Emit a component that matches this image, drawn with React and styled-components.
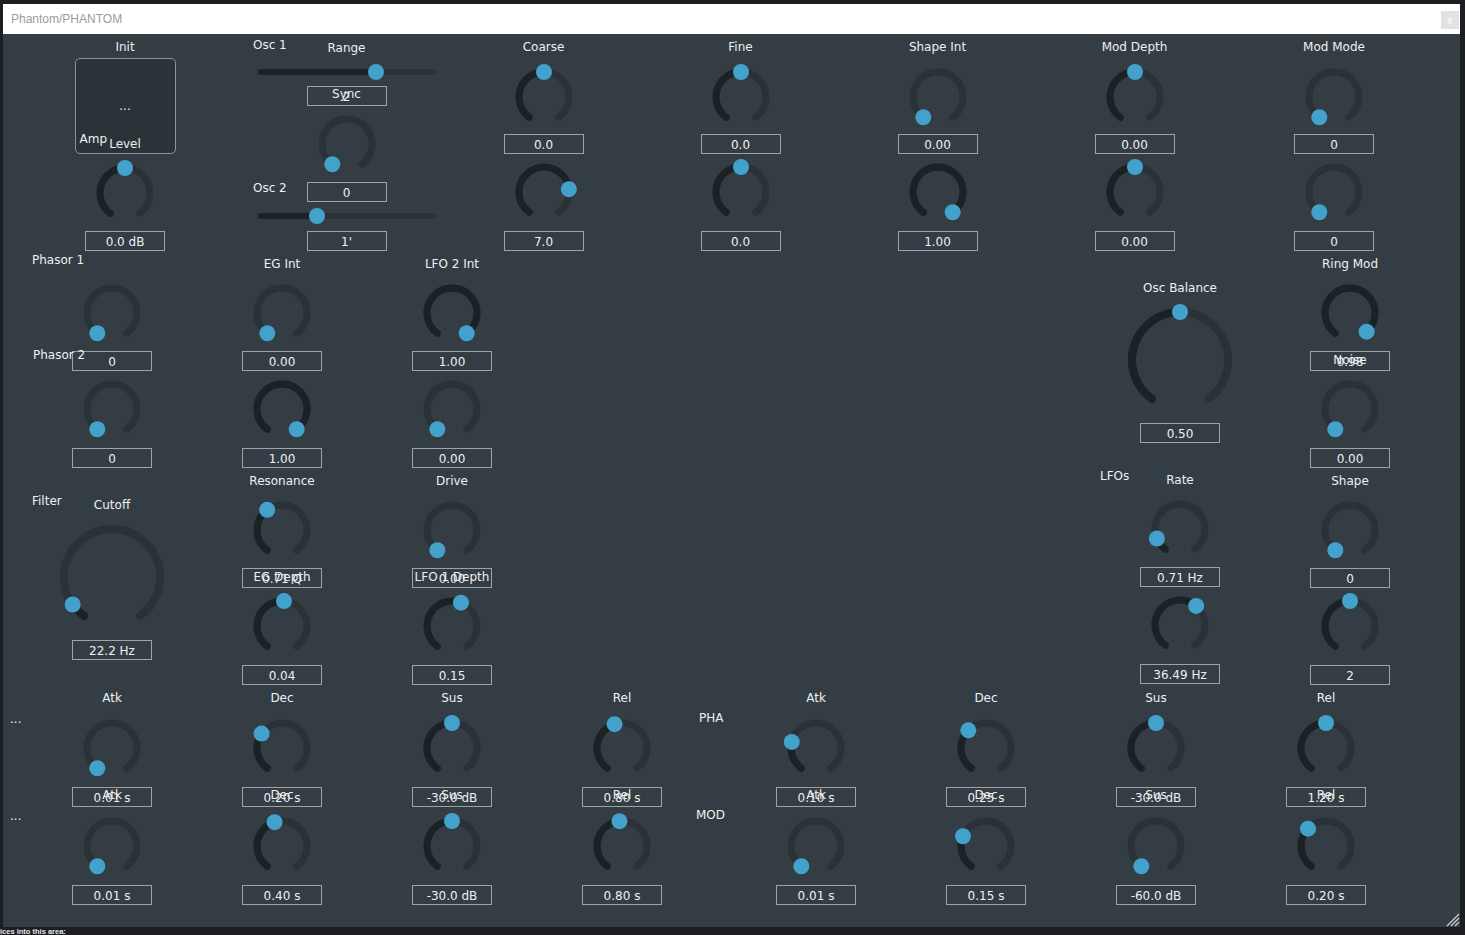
import React from 'react'
import styled, { createGlobalStyle } from 'styled-components'

const GlobalStyle = createGlobalStyle`
  html, body {
    margin: 0;
    padding: 0;
    background: #1c1e21;
  }
  body {
    font-family: "DejaVu Sans", sans-serif;
  }
`

const Page = styled.div`
  width: 1465px;
  height: 935px;
  box-sizing: border-box;
  padding: 4px 5px 0 3px;
  display: flex;
  flex-direction: column;
  overflow: hidden;
`

const Window = styled.div`
  width: 1457px;
  height: 923px;
  display: flex;
  flex-direction: column;
  flex-shrink: 0;
`

const TitleBar = styled.div`
  height: 30px;
  flex-shrink: 0;
  background: #ffffff;
  display: flex;
  align-items: center;
  justify-content: space-between;
  padding: 0 1px 0 8px;
`

const Title = styled.span`
  font: 12px "Liberation Sans", Arial, sans-serif;
  color: #9b9b9b;
`

const CloseButton = styled.div`
  width: 18px;
  height: 18px;
  margin-top: 2px;
  background: #e2e2e2;
  color: #f7f7f7;
  font: bold 10px "Liberation Sans", sans-serif;
  display: flex;
  align-items: center;
  justify-content: center;
`

const Panel = styled.div`
  position: relative;
  flex: 1;
  background: #343d44;
  color: #eef0f1;
  font: 12px "DejaVu Sans", sans-serif;
  display: flex;
  flex-direction: column;
`

const TopSection = styled.div`
  display: flex;
  align-items: flex-start;
  height: 217px;
  padding-left: 37px;
  flex-shrink: 0;
`

const MidSection = styled.div`
  display: flex;
  justify-content: space-between;
  align-items: flex-start;
  height: 438px;
  padding: 0 25px 0 24px;
  flex-shrink: 0;
`

const BottomSection = styled.div`
  display: flex;
  align-items: flex-start;
  padding-left: 7px;
`

const Group = styled.div`
  display: flex;
  align-items: flex-start;
`

const Col = styled.div`
  width: ${p => p.$w || 170}px;
  margin-left: ${p => p.$ml || 0}px;
  padding-top: ${p => p.$pt || 0}px;
  display: flex;
  flex-direction: column;
  align-items: center;
  flex-shrink: 0;
`

const Label = styled.div`
  height: 16px;
  line-height: 18px;
  white-space: nowrap;
  margin-top: ${p => p.$mt || 0}px;
  margin-left: ${p => p.$ml || 0}px;
  align-self: ${p => (p.$left ? 'flex-start' : 'center')};
  justify-self: ${p => (p.$left ? 'start' : 'center')};
`

const HeadRow = styled.div`
  width: 100%;
  display: grid;
  grid-template-columns: 1fr auto 1fr;
  align-items: start;
  margin-top: ${p => p.$mt || 0}px;
`

const KnobSvg = styled.svg`
  display: block;
  overflow: visible;
  flex-shrink: 0;
  margin-top: ${p => p.$mt || 0}px;
`

const BoxFrame = styled.div`
  position: relative;
  width: 80px;
  height: 20px;
  box-sizing: border-box;
  padding-top: 2px;
  border: 1px solid #9ea3a7;
  display: flex;
  align-items: center;
  justify-content: center;
  white-space: nowrap;
  margin-top: ${p => p.$mt}px;
  justify-self: center;
`

const BoxOver = styled.span`
  position: absolute;
  left: -10px;
  right: -10px;
  top: ${p => p.$top}px;
  line-height: 16px;
  text-align: center;
`

const BoxLead = styled.span`
  position: absolute;
  left: -40px;
  top: -5px;
  line-height: 17px;
  white-space: nowrap;
`

const InitButton = styled.div`
  position: relative;
  width: 101px;
  height: 96px;
  box-sizing: border-box;
  margin-top: 4px;
  border: 1px solid #8e9499;
  border-radius: 5px;
  background: #2b3338;
  display: flex;
  align-items: center;
  justify-content: center;
`

const ButtonText = styled.span`
  position: absolute;
  line-height: 16px;
  top: ${p => p.$top}px;
  left: ${p => (p.$center ? '0' : `${p.$left}px`)};
  right: ${p => (p.$center ? '0' : 'auto')};
  text-align: center;
`

const SliderWrap = styled.div`
  position: relative;
  width: 178px;
  height: 16px;
  margin-top: ${p => p.$mt || 0}px;
  display: flex;
  align-items: center;
`

const SliderTrack = styled.div`
  width: 100%;
  height: 6px;
  border-radius: 3px;
  background: #2a3238;
  overflow: hidden;
  display: flex;
`

const SliderFill = styled.div`
  height: 100%;
  background: #1b2226;
`

const SliderThumb = styled.div`
  position: absolute;
  top: 0;
  width: 16px;
  height: 16px;
  margin-left: -8px;
  border-radius: 50%;
  background: #42a2cc;
`

const DotsCol = styled.div`
  width: 17px;
  display: flex;
  flex-direction: column;
  flex-shrink: 0;
`

const RowTagCol = styled.div`
  width: 24px;
  display: flex;
  flex-direction: column;
  flex-shrink: 0;
`

const Grip = styled.svg`
  position: absolute;
  right: 0;
  bottom: 0;
`

const Footer = styled.div`
  margin-left: -3px;
  height: 8px;
  line-height: 9px;
  font: bold 7.5px "Liberation Sans", sans-serif;
  color: #e6e6e6;
  white-space: nowrap;
`

const polar = (c, r, deg) => {
  const a = (deg * Math.PI) / 180
  return [c + r * Math.sin(a), c - r * Math.cos(a)]
}

const arcPath = (c, r, a0, a1) => {
  const [x0, y0] = polar(c, r, a0)
  const [x1, y1] = polar(c, r, a1)
  return `M${x0} ${y0} A${r} ${r} 0 ${a1 - a0 > 180 ? 1 : 0} 1 ${x1} ${y1}`
}

function Knob({ value, big, mt }) {
  const size = big ? 106 : 58
  const stroke = big ? 8 : 7
  const c = size / 2
  const r = big ? c - 5 : c - 4
  const angle = -144 + 288 * value
  const [tx, ty] = polar(c, r, angle)
  return (
    <KnobSvg width={size} height={size} $mt={mt}>
      <path d={arcPath(c, r, -144, 144)} stroke="#2a3238" strokeWidth={stroke} fill="none" strokeLinecap="round" />
      {value > 0.01 && (
        <path d={arcPath(c, r, -144, angle)} stroke="#1b2226" strokeWidth={stroke} fill="none" strokeLinecap="round" />
      )}
      <circle cx={tx} cy={ty} r={8} fill="#42a2cc" />
    </KnobSvg>
  )
}

function ValueBox({ children, over, lead, mt = 9, overTop = -1 }) {
  return (
    <BoxFrame $mt={mt}>
      {children}
      {over && <BoxOver $top={overTop}>{over}</BoxOver>}
      {lead && <BoxLead>{lead}</BoxLead>}
    </BoxFrame>
  )
}

function HSlider({ value, mt }) {
  return (
    <SliderWrap $mt={mt}>
      <SliderTrack>
        <SliderFill style={{ width: `${value * 100}%` }} />
      </SliderTrack>
      <SliderThumb style={{ left: `${value * 100}%` }} />
    </SliderWrap>
  )
}

const topCols = [
  { label: 'Coarse', v1: 0.5, t1: '0.0', v2: 0.79, t2: '7.0', w: 197, ml: 5 },
  { label: 'Fine', v1: 0.5, t1: '0.0', v2: 0.5, t2: '0.0', w: 197 },
  { label: 'Shape Int', v1: 0, t1: '0.00', v2: 1, t2: '1.00', w: 197 },
  { label: 'Mod Depth', v1: 0.5, t1: '0.00', v2: 0.5, t2: '0.00', w: 197 },
  { label: 'Mod Mode', v1: 0, t1: '0', v2: 0, t2: '0', w: 202 },
]

const quadCols = {
  eg: { l1: 'EG Int', v1: 0, t1: '0.00', v2: 1, t2: '1.00', l2: 'Resonance', v3: 0.374, t3: '0.71 Q', o3: 'EG Depth', v4: 0.516, t4: '0.04' },
  lfo: { l1: 'LFO 2 Int', v1: 1, t1: '1.00', v2: 0, t2: '0.00', l2: 'Drive', v3: 0, t3: '0.00', o3: 'LFO 1 Depth', v4: 0.573, t4: '0.15' },
  ring: { l1: 'Ring Mod', v1: 0.98, t1: '0.98', o1: 'Noise', v2: 0, t2: '0.00', l2: 'Shape', v3: 0, t3: '0', v4: 0.5, t4: '2' },
}

const envLeft = [
  { label: 'Atk', v1: 0, t1: '0.01 s', v2: 0, t2: '0.01 s' },
  { label: 'Dec', v1: 0.31, t1: '0.20 s', v2: 0.44, t2: '0.40 s' },
  { label: 'Sus', v1: 0.5, t1: '-30.0 dB', v2: 0.5, t2: '-30.0 dB' },
  { label: 'Rel', v1: 0.44, t1: '0.80 s', v2: 0.48, t2: '0.80 s' },
]

const envRight = [
  { label: 'Atk', v1: 0.236, t1: '0.10 s', v2: 0, t2: '0.01 s' },
  { label: 'Dec', v1: 0.344, t1: '0.25 s', v2: 0.267, t2: '0.15 s' },
  { label: 'Sus', v1: 0.5, t1: '-30.0 dB', v2: 0, t2: '-60.0 dB' },
  { label: 'Rel', v1: 0.5, t1: '1.20 s', v2: 0.34, t2: '0.20 s' },
]

function TopCol({ c }) {
  return (
    <Col $w={c.w} $ml={c.ml} $pt={4}>
      <Label>{c.label}</Label>
      <Knob value={c.v1} mt={14} />
      <ValueBox mt={8}>{c.t1}</ValueBox>
      <Knob value={c.v2} mt={9} />
      <ValueBox mt={10}>{c.t2}</ValueBox>
    </Col>
  )
}

function QuadCol({ c }) {
  return (
    <Col>
      <Label $mt={4}>{c.l1}</Label>
      <Knob value={c.v1} mt={13} />
      <ValueBox over={c.o1} overTop={0}>{c.t1}</ValueBox>
      <Knob value={c.v2} mt={9} />
      <ValueBox mt={10}>{c.t2}</ValueBox>
      <Label $mt={4}>{c.l2}</Label>
      <Knob value={c.v3} mt={13} />
      <ValueBox over={c.o3} overTop={0}>{c.t3}</ValueBox>
      <Knob value={c.v4} mt={9} />
      <ValueBox mt={10}>{c.t4}</ValueBox>
    </Col>
  )
}

function EnvCol({ c }) {
  return (
    <Col>
      <Label>{c.label}</Label>
      <Knob value={c.v1} mt={14} />
      <ValueBox mt={10} over={c.label} overTop={-1}>{c.t1}</ValueBox>
      <Knob value={c.v2} mt={10} />
      <ValueBox mt={10}>{c.t2}</ValueBox>
    </Col>
  )
}

export default function App() {
  return (
    <Page>
      <GlobalStyle />
      <Window>
        <TitleBar>
          <Title>Phantom/PHANTOM</Title>
          <CloseButton>x</CloseButton>
        </TitleBar>
        <Panel>
          <TopSection>
            <Col $w={170} $pt={4}>
              <Label>Init</Label>
              <InitButton>
                ...
                <ButtonText $left={4} $top={72}>Amp</ButtonText>
                <ButtonText $center $top={77}>Level</ButtonText>
              </InitButton>
              <Knob value={0.5} mt={10} />
              <ValueBox>0.0 dB</ValueBox>
            </Col>
            <Col $w={187} $ml={43} $pt={2}>
              <HeadRow>
                <Label $left>Osc 1</Label>
                <Label $mt={3}>Range</Label>
                <span />
              </HeadRow>
              <HSlider value={0.665} mt={9} />
              <ValueBox mt={6} over="Sync" overTop={-1}>2</ValueBox>
              <Knob value={0} mt={9} />
              <HeadRow $mt={6}>
                <Label $left>Osc 2</Label>
                <ValueBox mt={3}>0</ValueBox>
                <span />
              </HeadRow>
              <HSlider value={0.337} mt={6} />
              <ValueBox mt={7}>1'</ValueBox>
            </Col>
            {topCols.map(c => (
              <TopCol key={c.label} c={c} />
            ))}
          </TopSection>

          <MidSection>
            <Group>
              <Col>
                <Label $left $ml={5}>Phasor 1</Label>
                <Knob value={0} mt={17} />
                <ValueBox lead="Phasor 2">0</ValueBox>
                <Knob value={0} mt={9} />
                <ValueBox mt={10}>0</ValueBox>
                <HeadRow $mt={24}>
                  <Label $left $ml={5}>Filter</Label>
                  <Label $mt={4}>Cutoff</Label>
                  <span />
                </HeadRow>
                <Knob big value={0.066} mt={12} />
                <ValueBox mt={10}>22.2 Hz</ValueBox>
              </Col>
              <QuadCol c={quadCols.eg} />
              <QuadCol c={quadCols.lfo} />
            </Group>
            <Group>
              <Col>
                <Label $mt={28}>Osc Balance</Label>
                <Knob big value={0.5} mt={12} />
                <ValueBox mt={10}>0.50</ValueBox>
                <HeadRow $mt={24}>
                  <Label $left $ml={5}>LFOs</Label>
                  <Label $mt={4}>Rate</Label>
                  <span />
                </HeadRow>
                <Knob value={0.11} mt={13} />
                <ValueBox>0.71 Hz</ValueBox>
                <Knob value={0.64} mt={9} />
                <ValueBox mt={10}>36.49 Hz</ValueBox>
              </Col>
              <QuadCol c={quadCols.ring} />
            </Group>
          </MidSection>

          <BottomSection>
            <DotsCol>
              <Label $left $mt={21}>...</Label>
              <Label $left $mt={81}>...</Label>
            </DotsCol>
            <Group>
              {envLeft.map(c => (
                <EnvCol key={'l' + c.label} c={c} />
              ))}
            </Group>
            <RowTagCol>
              <Label $left $ml={-8} $mt={20}>PHA</Label>
              <Label $left $ml={-11} $mt={81}>MOD</Label>
            </RowTagCol>
            <Group>
              {envRight.map(c => (
                <EnvCol key={'r' + c.label} c={c} />
              ))}
            </Group>
          </BottomSection>

          <Grip width="15" height="15" viewBox="0 0 15 15">
            <path d="M14 2 L2 14 M14 6 L6 14 M14 10 L10 14" stroke="#c9ced1" strokeWidth="1.3" />
          </Grip>
        </Panel>
      </Window>
      <Footer>ices into this area:</Footer>
    </Page>
  )
}
